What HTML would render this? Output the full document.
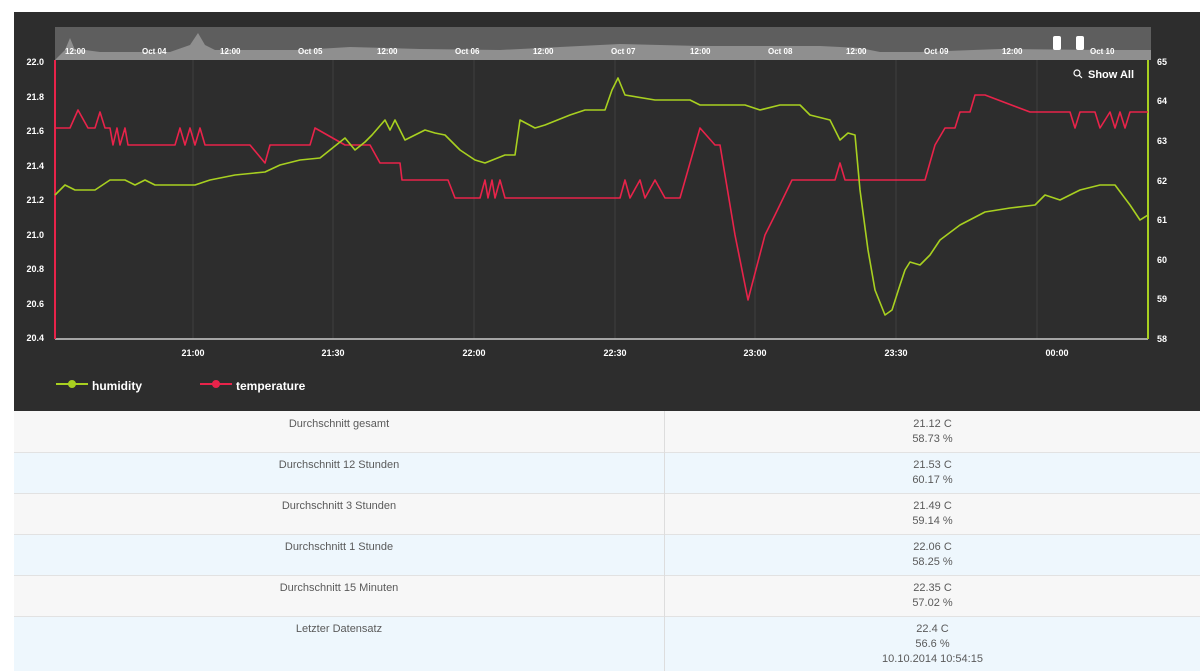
<!DOCTYPE html>
<html><head><meta charset="utf-8"><style>
html,body{margin:0;padding:0;background:#fff;width:1200px;height:671px;overflow:hidden;font-family:"Liberation Sans",sans-serif}
#chart{position:absolute;left:14px;top:12px;width:1186px;height:399px;background:#2c2c2c}
.row{position:absolute;left:14px;width:1186px;font-size:11px;color:#5a5a5a;line-height:15px;border-bottom:1px solid #e2e2e2;box-sizing:border-box}
.row div{position:absolute;top:5px;text-align:center}
.l{left:0;width:650px}
.r{left:651px;width:535px}
.sep{position:absolute;left:664px;top:411px;width:1px;height:260px;background:#ddd}
.o{background:#f7f7f7}.e{background:#eef7fd}
</style></head><body>
<div id="chart">
<svg width="1186" height="399" viewBox="14 12 1186 399" xmlns="http://www.w3.org/2000/svg" font-family="Liberation Sans" font-weight="bold" fill="#fff">
<rect x="14" y="12" width="1186" height="399" fill="#2d2d2d"/>
<rect x="55" y="27" width="1096" height="33" fill="#5e5e5e"/>
<path d="M55 60 L65 50 L70 38 L75 50 L85 50 L100 52 L170 52 L190 45 L198 33 L205 45 L215 50 L300 50 L350 47 L420 49 L500 50 L560 47 L620 44 L700 46 L820 46 L860 48 L880 52 L920 52 L1000 49 L1100 50 L1151 50 L1151 60 Z" fill="#8f8f8f"/>
<rect x="1053" y="36" width="8" height="14" fill="#fff" rx="2"/><rect x="1076" y="36" width="8" height="14" fill="#fff" rx="2"/>
<g font-size="8">
<text x="65" y="54">12:00</text><text x="142" y="54">Oct 04</text><text x="220" y="54">12:00</text><text x="298" y="54">Oct 05</text><text x="377" y="54">12:00</text><text x="455" y="54">Oct 06</text><text x="533" y="54">12:00</text><text x="611" y="54">Oct 07</text><text x="690" y="54">12:00</text><text x="768" y="54">Oct 08</text><text x="846" y="54">12:00</text><text x="924" y="54">Oct 09</text><text x="1002" y="54">12:00</text><text x="1090" y="54">Oct 10</text>
</g>
<g stroke="#404040" stroke-width="1"><line x1="193" y1="60" x2="193" y2="339"/><line x1="333" y1="60" x2="333" y2="339"/><line x1="474" y1="60" x2="474" y2="339"/><line x1="615" y1="60" x2="615" y2="339"/><line x1="755" y1="60" x2="755" y2="339"/><line x1="896" y1="60" x2="896" y2="339"/><line x1="1037" y1="60" x2="1037" y2="339"/></g>
<line x1="55" y1="339" x2="1148" y2="339" stroke="#ccc" stroke-width="1.5"/>
<line x1="55" y1="60" x2="55" y2="339" stroke="#e8234a" stroke-width="2"/>
<line x1="1148" y1="60" x2="1148" y2="339" stroke="#a8d020" stroke-width="2"/>
<g font-size="9" text-anchor="end"><text x="44" y="65">22.0</text><text x="44" y="100">21.8</text><text x="44" y="134">21.6</text><text x="44" y="169">21.4</text><text x="44" y="203">21.2</text><text x="44" y="238">21.0</text><text x="44" y="272">20.8</text><text x="44" y="307">20.6</text><text x="44" y="341">20.4</text></g>
<g font-size="9"><text x="1157" y="65">65</text><text x="1157" y="104">64</text><text x="1157" y="144">63</text><text x="1157" y="184">62</text><text x="1157" y="223">61</text><text x="1157" y="263">60</text><text x="1157" y="302">59</text><text x="1157" y="342">58</text></g>
<g font-size="9" text-anchor="middle"><text x="193" y="356">21:00</text><text x="333" y="356">21:30</text><text x="474" y="356">22:00</text><text x="615" y="356">22:30</text><text x="755" y="356">23:00</text><text x="896" y="356">23:30</text><text x="1057" y="356">00:00</text></g>
<text x="1088" y="78" font-size="11">Show All</text>
<circle cx="1077" cy="73" r="3" fill="none" stroke="#fff" stroke-width="1.2"/><line x1="1079" y1="75" x2="1082" y2="78" stroke="#fff" stroke-width="1.2"/>
<polyline fill="none" stroke="#e8234a" stroke-width="1.6" stroke-linejoin="round" points="56,128 70,128 78,110 88,128 95,128 100,112 105,128 110,128 113,145 117,128 120,145 125,128 128,145 140,145 175,145 180,128 185,145 190,128 195,145 200,128 205,145 250,145 265,163 270,145 310,145 315,128 345,145 370,145 380,163 400,163 402,180 448,180 455,198 480,198 485,180 488,198 492,180 495,198 500,180 505,198 620,198 625,180 630,198 640,180 645,198 655,180 665,198 680,198 700,128 715,145 720,145 735,235 748,300 765,235 775,215 792,180 835,180 840,163 845,180 925,180 935,145 945,128 955,128 960,112 970,112 975,95 985,95 1030,112 1070,112 1075,128 1080,112 1095,112 1100,128 1110,112 1115,128 1120,112 1125,128 1130,112 1137,112 1148,112"/>
<polyline fill="none" stroke="#a8d020" stroke-width="1.6" stroke-linejoin="round" points="55,195 65,185 75,190 95,190 110,180 125,180 135,185 145,180 155,185 195,185 210,180 235,175 265,172 280,165 300,160 320,158 345,138 355,150 365,142 372,135 385,120 390,130 395,120 405,140 415,135 425,130 435,133 445,135 460,150 475,160 485,163 505,155 515,155 520,120 535,128 545,125 570,115 585,110 605,110 612,90 618,78 625,95 655,100 690,100 700,105 745,105 760,110 780,105 800,105 810,115 830,120 840,140 848,133 855,135 860,190 868,250 875,290 885,315 892,310 900,285 905,270 910,262 920,265 930,255 940,240 960,225 985,212 1010,208 1035,205 1045,195 1060,200 1080,190 1100,185 1115,185 1130,205 1140,220 1148,215"/>
<line x1="56" y1="384" x2="88" y2="384" stroke="#a8d020" stroke-width="2"/><circle cx="72" cy="384" r="4" fill="#a8d020"/>
<text x="92" y="390" font-size="12">humidity</text>
<line x1="200" y1="384" x2="232" y2="384" stroke="#e8234a" stroke-width="2"/><circle cx="216" cy="384" r="4" fill="#e8234a"/>
<text x="236" y="390" font-size="12">temperature</text>
</svg></div>
<div class="row o" style="top:411px;height:42px"><div class="l" style="top:6px">Durchschnitt gesamt</div><div class="r" style="top:6px">21.12 C<br>58.73 %</div></div>
<div class="row e" style="top:453px;height:41px"><div class="l">Durchschnitt 12 Stunden</div><div class="r">21.53 C<br>60.17 %</div></div>
<div class="row o" style="top:494px;height:41px"><div class="l">Durchschnitt 3 Stunden</div><div class="r">21.49 C<br>59.14 %</div></div>
<div class="row e" style="top:535px;height:41px"><div class="l">Durchschnitt 1 Stunde</div><div class="r">22.06 C<br>58.25 %</div></div>
<div class="row o" style="top:576px;height:41px"><div class="l">Durchschnitt 15 Minuten</div><div class="r">22.35 C<br>57.02 %</div></div>
<div class="row e" style="top:617px;height:54px;border-bottom:0"><div class="l">Letzter Datensatz</div><div class="r">22.4 C<br>56.6 %<br>10.10.2014 10:54:15</div></div>
<div class="sep"></div>
</body></html>
